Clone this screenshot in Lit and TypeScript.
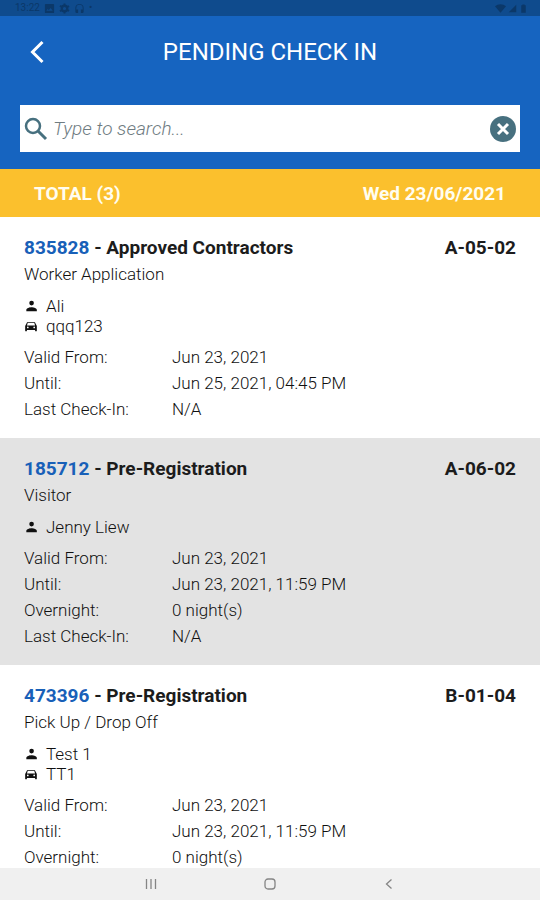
import { LitElement, html, css, svg, nothing } from "lit";
import { customElement, property, state } from "lit/decorators.js";

interface Visit {
  id: string;
  type: string;
  unit: string;
  purpose: string;
  person: string;
  vehicle?: string;
  details: [string, string][];
}

const VISITS: Visit[] = [
  {
    id: "835828",
    type: "Approved Contractors",
    unit: "A-05-02",
    purpose: "Worker Application",
    person: "Ali",
    vehicle: "qqq123",
    details: [
      ["Valid From:", "Jun 23, 2021"],
      ["Until:", "Jun 25, 2021, 04:45 PM"],
      ["Last Check-In:", "N/A"],
    ],
  },
  {
    id: "185712",
    type: "Pre-Registration",
    unit: "A-06-02",
    purpose: "Visitor",
    person: "Jenny Liew",
    details: [
      ["Valid From:", "Jun 23, 2021"],
      ["Until:", "Jun 23, 2021, 11:59 PM"],
      ["Overnight:", "0 night(s)"],
      ["Last Check-In:", "N/A"],
    ],
  },
  {
    id: "473396",
    type: "Pre-Registration",
    unit: "B-01-04",
    purpose: "Pick Up / Drop Off",
    person: "Test 1",
    vehicle: "TT1",
    details: [
      ["Valid From:", "Jun 23, 2021"],
      ["Until:", "Jun 23, 2021, 11:59 PM"],
      ["Overnight:", "0 night(s)"],
    ],
  },
];

const icon = (size: number, body: unknown) => html`<svg
  width=${size}
  height=${size}
  viewBox="0 0 24 24"
  fill="currentColor"
  aria-hidden="true"
>${body}</svg>`;

const personShape = svg`<path d="M13 11a4 4 0 1 0 0-8 4 4 0 0 0 0 8zM4 21h18v-2.500c0-3-6-4.500-9-4.500s-9 1.500-9 4.500z"/>`;
const carShape = svg`<path d="M18.920 6.010C18.720 5.420 18.160 5 17.500 5h-11c-.66 0-1.210.42-1.420 1.010L2 12v8c0 .55.45 1 1 1h1c.55 0 1-.45 1-1v-1h14v1c0 .55.45 1 1 1h1c.55 0 1-.45 1-1v-8l-3.080-5.990zM6.500 16a1.500 1.500 0 1 1 0-3 1.500 1.500 0 0 1 0 3zm11 0a1.500 1.500 0 1 1 0-3 1.500 1.500 0 0 1 0 3zM5 11l1.500-4.500h11L19 11H5z"/>`;

@customElement("status-bar")
class StatusBar extends LitElement {
  static styles = css`
    :host {
      display: flex;
      justify-content: space-between;
      align-items: center;
      height: 16px;
      padding: 0 12px 0 15px;
      background: #0f4b8d;
      color: #0b3869;
      font-size: 10px;
      line-height: 16px;
    }
    .group {
      display: flex;
      align-items: center;
      gap: 4px;
    }
    .signals {
      gap: 2px;
    }
    svg {
      display: block;
    }
  `;
  render() {
    return html`
      <div class="group">
        <span>13:22</span>
        ${icon(11, svg`<path fill-rule="evenodd" d="M4 2h16a2 2 0 0 1 2 2v16a2 2 0 0 1-2 2H4a2 2 0 0 1-2-2V4a2 2 0 0 1 2-2zm1 15h14l-4.500-6-4 5-2.500-3z"/>`)}
        ${icon(11, svg`<circle cx="12" cy="12" r="6" fill="none" stroke="currentColor" stroke-width="5"/><path d="M10 1h4v4h-4zM10 19h4v4h-4zM1 8l2-3.500 4 2-2 3.500zM17 17l2-3.500 4 2-2 3.500zM1 16l2 3.500 4-2-2-3.500zM17 7l2 3.500 4-2L21 5z"/>`)}
        ${icon(11, svg`<path d="M12 2a9 9 0 0 0-9 9v8a3 3 0 0 0 3 3h3v-8H5v-3a7 7 0 0 1 14 0v3h-4v8h3a3 3 0 0 0 3-3v-8a9 9 0 0 0-9-9z"/>`)}
        <span>•</span>
      </div>
      <div class="group signals">
        ${icon(11, svg`<path d="M12 21L24 7C17 1 7 1 0 7z"/>`)}
        ${icon(9, svg`<path d="M2 22h20V2z"/>`)}
        ${icon(9, svg`<path d="M9 1h6v2h3v20H6V3h3z"/>`)}
      </div>
    `;
  }
}

@customElement("visit-card")
class VisitCard extends LitElement {
  @property({ attribute: false }) visit!: Visit;

  static styles = css`
    :host {
      display: block;
      padding: 17px 24px 16px;
      color: #101010;
      font-size: 17px;
      font-weight: 300;
    }
    .head {
      display: flex;
      justify-content: space-between;
      margin: 0;
      font-size: 19px;
      line-height: 28px;
      font-weight: 700;
      color: #1c1c1c;
    }
    .id {
      color: #1860b8;
      text-decoration: none;
    }
    .purpose {
      margin: 0 0 9px;
      line-height: 25px;
    }
    .who {
      display: flex;
      align-items: center;
      gap: 8px;
      line-height: 20px;
    }
    .who svg {
      color: #111;
    }
    .details {
      display: grid;
      grid-template-columns: 148px 1fr;
      margin: 8px 0 0;
      line-height: 26px;
    }
    .details dd {
      margin: 0;
    }
  `;

  render() {
    const v = this.visit;
    return html`
      <h2 class="head">
        <span><a class="id" href="#${v.id}">${v.id}</a> - ${v.type}</span>
        <span>${v.unit}</span>
      </h2>
      <p class="purpose">${v.purpose}</p>
      <div class="who">${icon(14, personShape)}<span>${v.person}</span></div>
      ${v.vehicle
        ? html`<div class="who">${icon(14, carShape)}<span>${v.vehicle}</span></div>`
        : nothing}
      <dl class="details">
        ${v.details.map(([k, val]) => html`<dt>${k}</dt><dd>${val}</dd>`)}
      </dl>
    `;
  }
}

@customElement("app-root")
class AppRoot extends LitElement {
  @state() private query = "";

  static styles = css`
    :host {
      display: flex;
      flex-direction: column;
      height: 100vh;
      overflow: hidden;
      background: #fff;
      font-family: Roboto, "Liberation Sans", sans-serif;
    }
    button {
      display: flex;
      align-items: center;
      justify-content: center;
      padding: 0;
      border: 0;
      background: none;
      color: inherit;
      cursor: pointer;
    }
    .header {
      padding: 12px 20px 17px;
      background: #1664c0;
      color: #fff;
    }
    .bar {
      display: grid;
      grid-template-columns: 34px 1fr 34px;
      align-items: center;
      margin-bottom: 29px;
    }
    .back {
      height: 48px;
    }
    .title {
      margin: 0;
      text-align: center;
      font-size: 24px;
      line-height: 48px;
      font-weight: 400;
    }
    .search {
      display: flex;
      align-items: center;
      height: 47px;
      padding: 0 3px;
      background: #fff;
      color: #47707f;
    }
    .field {
      flex: 1;
      min-width: 0;
      padding: 0 4px;
      border: 0;
      outline: 0;
      background: none;
      font: 300 italic 19px/28px Roboto, "Liberation Sans", sans-serif;
      color: #37474f;
    }
    .field::placeholder {
      color: #6f7c82;
      opacity: 1;
    }
    .summary {
      display: flex;
      align-items: center;
      justify-content: space-between;
      height: 48px;
      padding: 0 34px;
      background: #fbc02d;
      color: #fffdf0;
      font-size: 19px;
      font-weight: 700;
    }
    .list {
      flex: 1;
      min-height: 0;
      overflow-y: auto;
      scrollbar-width: none;
    }
    .shaded {
      background: #e3e3e3;
    }
    .nav {
      display: flex;
      justify-content: center;
      height: 32px;
      background: #f0f0f0;
      color: #858585;
    }
    .nav button {
      width: 22%;
    }
  `;

  private onInput(e: Event) {
    this.query = (e.target as HTMLInputElement).value;
  }

  render() {
    const q = this.query.toLowerCase();
    const visits = VISITS.filter((v) => JSON.stringify(v).toLowerCase().includes(q));
    return html`
      <status-bar></status-bar>
      <header class="header">
        <div class="bar">
          <button class="back" aria-label="Back">
            <svg width="18" height="24" viewBox="0 0 18 24" fill="none" stroke="currentColor" stroke-width="3">
              <path d="M14.500 2L4.500 12l10 10" />
            </svg>
          </button>
          <h1 class="title">PENDING CHECK IN</h1>
        </div>
        <div class="search">
          <svg width="26" height="26" viewBox="0 0 26 26" fill="none" stroke="currentColor" aria-hidden="true">
            <circle cx="10" cy="10" r="7" stroke-width="2.500" />
            <path d="M15 15l8 8" stroke-width="3" />
          </svg>
          <input
            class="field"
            type="text"
            aria-label="Search"
            placeholder="Type to search..."
            .value=${this.query}
            @input=${this.onInput}
          />
          <button aria-label="Clear search" @click=${() => (this.query = "")}>
            <svg width="28" height="28" viewBox="0 0 28 28">
              <circle cx="14" cy="14" r="13" fill="currentColor" />
              <path d="M9 9l10 10M19 9L9 19" stroke="#fff" stroke-width="3" />
            </svg>
          </button>
        </div>
      </header>
      <div class="summary">
        <span>TOTAL (${visits.length})</span>
        <span>Wed 23/06/2021</span>
      </div>
      <main class="list">
        ${visits.map(
          (v, i) => html`<visit-card class=${i % 2 ? "shaded" : ""} .visit=${v}></visit-card>`
        )}
      </main>
      <nav class="nav">
        <button aria-label="Recent apps">
          <svg width="12" height="12" viewBox="0 0 12 12" stroke="currentColor" stroke-width="1.300">
            <path d="M1.500 1v10M6 1v10M10.500 1v10" />
          </svg>
        </button>
        <button aria-label="Home">
          <svg width="12" height="12" viewBox="0 0 12 12" fill="none" stroke="currentColor" stroke-width="1.300">
            <rect x="1" y="1" width="10" height="10" rx="3" />
          </svg>
        </button>
        <button aria-label="Back">
          <svg width="12" height="12" viewBox="0 0 12 12" fill="none" stroke="currentColor" stroke-width="1.300">
            <path d="M8.500 1.500L3.500 6l5 4.500" />
          </svg>
        </button>
      </nav>
    `;
  }
}
